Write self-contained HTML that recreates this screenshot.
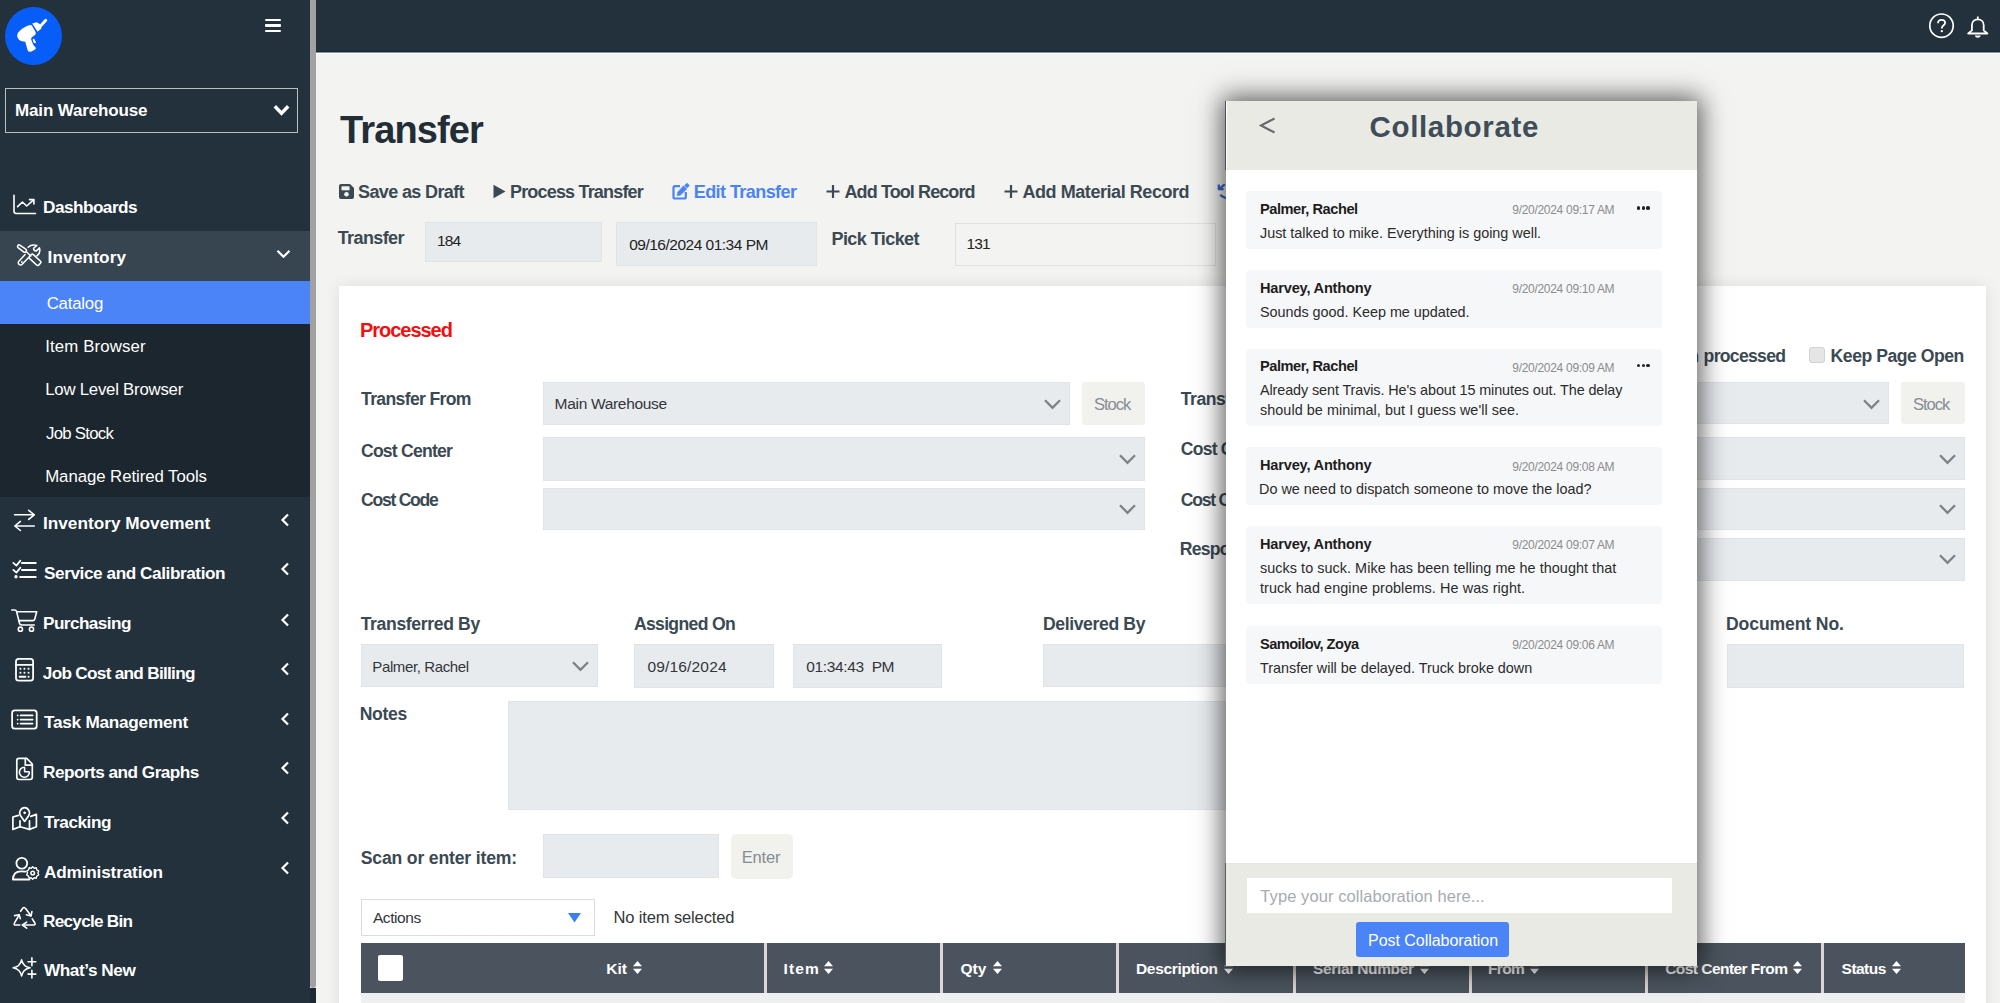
<!DOCTYPE html>
<html><head><meta charset="utf-8">
<style>
html,body{margin:0;padding:0}
body{width:2000px;height:1003px;overflow:hidden;position:relative;background:#f3f3f1;font-family:"Liberation Sans",sans-serif}
.a{position:absolute;box-sizing:border-box}
.t{position:absolute;white-space:nowrap;line-height:1;font-family:"Liberation Sans",sans-serif}
.inp{position:absolute;background:#e8ebee;box-sizing:border-box;border:1px solid #e1e4e7}
.chev{position:absolute}
.mc{position:absolute;left:1246.3px;width:416px;background:#f6f7f9;border-radius:4px;z-index:15}
.dots{position:absolute;left:1637px;margin-top:-1px;width:13px;height:4px;z-index:20}
.dots i{position:absolute;top:0;width:3.4px;height:3.4px;border-radius:50%;background:#222}
.dots i:nth-child(1){left:0}.dots i:nth-child(2){left:4.7px}.dots i:nth-child(3){left:9.4px}
svg{position:absolute;overflow:visible}
</style></head><body>

<!-- sidebar -->
<div class="a" style="left:0;top:0;width:310px;height:1003px;background:#22313b"></div>
<div class="a" style="left:310px;top:0;width:6px;height:988px;background:#a1a1a1;border-radius:0 0 3px 3px"></div>
<div class="a" style="left:310px;top:988px;width:6px;height:15px;background:#1c2931"></div>
<!-- logo -->
<div class="a" style="left:5px;top:7px;width:57px;height:58px;border-radius:50%;background:#075df8"></div>
<svg style="left:5px;top:7px" width="57" height="58" viewBox="0 0 57 58">
  <path d="M36 18.5 L40.8 13.2" stroke="#fff" stroke-width="2.8" stroke-linecap="round"/>
  <path d="M27.2 16.6 L31.5 15.3 L34 16.6 L36.4 18.6 L36.4 21.4 L32.6 24.8 Z" fill="#fff"/>
  <path d="M24.3 18.2 C20 19.5 14.5 23 12.6 26.5 C11.5 29.5 12.8 33 17 34.2 L20.3 34.8 L22.4 42.5 C22.9 44.6 24.5 45.3 26.5 44.5 L30 42.5 C31 41.8 31 40.8 30.2 40 L28.2 37.8 L26.2 32.5 C26 31.5 26.6 30.5 27.5 29.8 L30 28 C31 27 31 25.8 30.3 24.5 L27 18.8 C26.4 17.9 25.5 17.8 24.3 18.2 Z" fill="#fff"/>
  <path d="M27.6 32.4 L29 31.6 L31 35.2 L30.2 36.2 L28.8 35.9 Z" fill="#fff"/>
</svg>
<!-- hamburger -->
<div class="a" style="left:265px;top:18.5px;width:16px;height:2.6px;background:#fff;border-radius:1px"></div>
<div class="a" style="left:265px;top:24.2px;width:16px;height:2.6px;background:#fff;border-radius:1px"></div>
<div class="a" style="left:265px;top:29.8px;width:16px;height:2.6px;background:#fff;border-radius:1px"></div>
<!-- warehouse select -->
<div class="a" style="left:5px;top:88px;width:293px;height:44.5px;border:1.5px solid #b9bfc3"></div>
<svg style="left:273px;top:104px" width="17" height="12" viewBox="0 0 17 12"><path d="M1.8 2.2 L8.5 9.2 L15.2 2.2" fill="none" stroke="#fff" stroke-width="3.4"/></svg>
<!-- inventory group -->
<div class="a" style="left:0;top:231px;width:310px;height:50px;background:#36454f"></div>
<div class="a" style="left:0;top:281px;width:310px;height:42.5px;background:#4b84f6"></div>
<div class="a" style="left:0;top:323.5px;width:310px;height:173px;background:#1b262e"></div>
<svg style="left:276px;top:249px" width="15" height="10" viewBox="0 0 15 10"><path d="M1.5 1.8 L7.5 7.8 L13.5 1.8" fill="none" stroke="#fff" stroke-width="2.2"/></svg>
<!-- left chevrons -->
<svg style="left:280px;top:513px" width="10" height="14" viewBox="0 0 10 14"><path d="M8 1.5 L2.5 7 L8 12.5" fill="none" stroke="#fff" stroke-width="2.2"/></svg>
<svg style="left:280px;top:562px" width="10" height="14" viewBox="0 0 10 14"><path d="M8 1.5 L2.5 7 L8 12.5" fill="none" stroke="#fff" stroke-width="2.2"/></svg>
<svg style="left:280px;top:612.5px" width="10" height="14" viewBox="0 0 10 14"><path d="M8 1.5 L2.5 7 L8 12.5" fill="none" stroke="#fff" stroke-width="2.2"/></svg>
<svg style="left:280px;top:662px" width="10" height="14" viewBox="0 0 10 14"><path d="M8 1.5 L2.5 7 L8 12.5" fill="none" stroke="#fff" stroke-width="2.2"/></svg>
<svg style="left:280px;top:712px" width="10" height="14" viewBox="0 0 10 14"><path d="M8 1.5 L2.5 7 L8 12.5" fill="none" stroke="#fff" stroke-width="2.2"/></svg>
<svg style="left:280px;top:761px" width="10" height="14" viewBox="0 0 10 14"><path d="M8 1.5 L2.5 7 L8 12.5" fill="none" stroke="#fff" stroke-width="2.2"/></svg>
<svg style="left:280px;top:811px" width="10" height="14" viewBox="0 0 10 14"><path d="M8 1.5 L2.5 7 L8 12.5" fill="none" stroke="#fff" stroke-width="2.2"/></svg>
<svg style="left:280px;top:861px" width="10" height="14" viewBox="0 0 10 14"><path d="M8 1.5 L2.5 7 L8 12.5" fill="none" stroke="#fff" stroke-width="2.2"/></svg>
<!-- menu icons -->
<svg style="left:0;top:0" width="60" height="1003" viewBox="0 0 60 1003">
<g fill="none" stroke="#fff" stroke-width="1.6" stroke-linecap="round" stroke-linejoin="round">
  <!-- dashboards -->
  <path d="M14 195.2 L14 211.3 Q14 213.5 16.2 213.5 L35.5 213.5"/>
  <path d="M17.6 206.6 L22.4 202 L26.7 206 L33.6 199.8"/>
  <path d="M29.5 199.6 L33.9 199.6 L33.9 204"/>
  <!-- inventory tools -->
  <path d="M19.4 244.9 L25.8 249.2 Q26.9 250 26.4 251.3 L25.6 252 Q24.6 252.6 23.6 251.9 L18 247.6 Q17 246.6 17.8 245.6 Q18.4 244.6 19.4 244.9 Z" stroke-width="1.5"/>
  <path d="M26.2 251.6 L30.8 255.9" stroke-width="1.4"/>
  <rect x="-6.3" y="-2.7" width="12.6" height="5.4" rx="1.6" transform="translate(35 259.8) rotate(42.7)" stroke-width="1.6"/>
  <path d="M25.1 254.6 L18.9 261.2 A2.2 2.2 0 0 0 22.2 264.3 L28.4 257.7" stroke-width="1.5"/>
  <path d="M28.2 247.2 Q31.2 244.2 36.8 245.5 L33.6 248.3 Q33.4 250.8 36.2 251.1 L39.5 247.9 Q41 252.8 36.9 255.8" stroke-width="1.5"/>
  <circle cx="21.8" cy="262" r="0.45" fill="#fff" stroke-width="0.8"/>
<!-- inventory movement -->
  <path d="M14.6 514.8 L34.3 514.8 M28.7 510.3 L34.3 514.8 L28.7 519.4"/>
  <path d="M34.3 526 L14.8 526 M20.4 521.4 L14.8 526 L20.4 530.5"/>
  <!-- service -->
  <path d="M13.3 562.8 L16.4 565.6 L20.4 560.6 M13.3 569.8 L16.4 572.6 L20.4 567.6" stroke-width="1.7"/>
  <path d="M22 563 L35.7 563 M22 570 L35.7 570 M20.2 576.9 L35.7 576.9" stroke-width="2"/>
  <circle cx="16" cy="576.8" r="1.1" fill="#fff" stroke-width="1.2"/>
  <!-- purchasing -->
  <path d="M11.8 610 L14.6 610 Q16.2 610 16.6 611.6 L19.4 623 Q19.8 625 21.6 625 L34.3 625"/>
  <path d="M16.8 611.8 L36.7 611.8 L34.8 619 Q34.4 620.6 32.8 620.6 L18.8 620.6"/>
  <circle cx="20.4" cy="629.2" r="2.1"/><circle cx="31.5" cy="629.2" r="2.1"/>
  <!-- job cost -->
  <rect x="16" y="658.8" width="17.1" height="21.8" rx="2.6" stroke-width="1.8"/>
  <path d="M16 664.8 L33 664.8" stroke-width="1.8"/>
  <path d="M20.4 668.7 L20.5 668.7 M24.4 668.7 L24.5 668.7 M28.5 668.7 L28.6 668.7 M20.4 672.8 L20.5 672.8 M24.4 672.8 L24.5 672.8 M28.5 672.8 L28.6 672.8 M19.6 676.8 L25.4 676.8 M28.5 676.8 L28.6 676.8" stroke-width="1.9"/>
  <!-- task mgmt -->
  <rect x="12.1" y="710.4" width="24.6" height="18.2" rx="2.6" stroke-width="1.8"/>
  <path d="M17.6 715.4 L17.7 715.4 M17.6 719.6 L17.7 719.6 M17.6 723.6 L17.7 723.6 M20.6 715.4 L32.6 715.4 M20.6 719.6 L32.6 719.6 M20.6 723.6 L32.6 723.6" stroke-width="1.7"/>
  <!-- reports -->
  <path d="M19 758.4 L26.7 758.4 L32.3 764 L32.3 777.3 Q32.3 779.5 30.1 779.5 L19 779.5 Q16.8 779.5 16.8 777.3 L16.8 760.6 Q16.8 758.4 19 758.4 Z" stroke-width="1.7"/>
  <path d="M25.3 758.6 L25.3 765.2 L32 765.2" stroke-width="1.7"/>
  <path d="M29.4 772.2 A5 5 0 1 1 24.4 767.2" stroke-width="1.6"/>
  <path d="M24.6 767.8 L24.6 771.8 L28.8 771.8" stroke-width="1.6"/>
  <!-- tracking -->
  <path d="M18.4 815.4 L12.9 817 L12.9 829.4 L20 826.8 L29.5 829.4 L36.4 826.8 L36.4 814.4 L30.8 816.4" stroke-width="1.7"/>
  <path d="M20 820.8 L20 826.8 M29.5 820.8 L29.5 829.4" stroke-width="1.7"/>
  <path d="M24.6 821.4 L20.4 815.6 Q19 812.8 20.2 810.6 Q21.8 807.6 24.6 807.6 Q27.4 807.6 29 810.6 Q30.2 812.8 28.8 815.6 Z" stroke-width="1.7"/>
  <circle cx="24.6" cy="812.8" r="0.9" fill="#fff" stroke-width="1"/>
  <!-- administration -->
  <circle cx="21.8" cy="863.2" r="5.4" stroke-width="1.8"/>
  <path d="M25.2 871.6 Q23.5 871.3 21 871.3 Q13.2 871.3 12.9 879.5 L29.5 879.5" stroke-width="1.8"/>
  <circle cx="32.7" cy="873" r="1.8" stroke-width="1.5"/>
  <path d="M32.7 866.8 L34.2 868.2 L36.3 867.8 L36.8 869.9 L38.7 871 L37.9 873 L38.7 875 L36.8 876.1 L36.3 878.2 L34.2 877.8 L32.7 879.2 L31.2 877.8 L29.1 878.2 L28.6 876.1 L26.7 875 L27.5 873 L26.7 871 L28.6 869.9 L29.1 867.8 L31.2 868.2 Z" stroke-width="1.4"/>
  <!-- recycle -->
  <path d="M20.6 911.2 L22.6 908.4 Q24.2 906.6 25.6 908.6 L30.8 915.6"/>
  <path d="M26.4 914.8 L31 916 L31.9 911.6"/>
  <path d="M32.2 918.8 L35 923.2 Q35.6 924.8 33.8 924.9 L22.6 925"/>
  <path d="M26.7 922.2 L22.4 925 L26.7 928.2"/>
  <path d="M19.8 925 L15.4 925 Q13.6 925 14.4 923.2 L19.2 914.8"/>
  <path d="M14.6 915.6 L19.2 914.8 L20.3 918.6"/>
  <!-- what's new -->
  <path d="M21.6 959.8 Q23 966.4 30 967.8 Q23 969.2 21.6 975.9 Q20.2 969.2 13.2 967.8 Q20.2 966.4 21.6 959.8 Z" stroke-width="1.6"/>
  <path d="M31.9 957.9 L31.9 965.7 M28 961.8 L35.8 961.8 M31.9 970.2 L31.9 978 M28 974.1 L35.8 974.1" stroke-width="1.6"/>
</g>
</svg>


<!-- header -->
<div class="a" style="left:316px;top:0;width:1684px;height:52px;background:#22313b"></div>
<div class="a" style="left:316px;top:51px;width:1684px;height:1px;background:#19272f"></div>
<div class="a" style="left:316px;top:52px;width:1684px;height:1px;background:#8a9194"></div>
<div class="a" style="left:316px;top:53px;width:1684px;height:1px;background:#fdfdfc"></div>
<svg style="left:1928px;top:13px" width="26" height="26" viewBox="0 0 26 26">
  <circle cx="13.5" cy="12.7" r="11.7" fill="none" stroke="#fff" stroke-width="1.7"/>
  <path d="M10 10.2 C10 7.9 11.5 6.8 13.5 6.8 C15.6 6.8 17.1 8.1 17.1 9.9 C17.1 12.2 13.8 12.5 13.8 15.4" fill="none" stroke="#fff" stroke-width="1.8"/>
  <circle cx="13.8" cy="18.2" r="1.15" fill="#fff"/>
</svg>
<svg style="left:1967px;top:15px" width="22" height="25" viewBox="0 0 22 25">
  <path d="M10.8 1.4 L10.8 4.4 M4.9 15.4 L4.9 10.2 C4.9 6.6 7.5 4.4 10.8 4.4 C14.1 4.4 16.7 6.6 16.7 10.2 L16.7 15.4 L20.4 18.5 L1.2 18.5 Z" fill="none" stroke="#fff" stroke-width="1.8" stroke-linejoin="round"/>
  <path d="M7.9 20.6 C8.4 23.6 13.2 23.6 13.7 20.6 Z" fill="#fff"/>
</svg>

<!-- toolbar icons -->
<svg style="left:338.5px;top:183.5px" width="15" height="15" viewBox="0 0 15 15">
  <path d="M0 2 Q0 0 2 0 L11 0 L15 4 L15 13 Q15 15 13 15 L2 15 Q0 15 0 13 Z" fill="#3b4953"/>
  <rect x="2.5" y="2.3" width="8" height="4" fill="#f3f3f1"/>
  <circle cx="7.5" cy="10.3" r="2.3" fill="#f3f3f1"/>
</svg>
<svg style="left:493px;top:183.5px" width="13" height="15" viewBox="0 0 13 15"><path d="M0.5 0.8 L12.5 7.5 L0.5 14.2 Z" fill="#3b4953"/></svg>
<svg style="left:672px;top:182.5px" width="18" height="17" viewBox="0 0 18 17">
  <path d="M8 3.2 L3 3.2 Q1.5 3.2 1.5 4.7 L1.5 14 Q1.5 15.5 3 15.5 L12.3 15.5 Q13.8 15.5 13.8 14 L13.8 9" fill="none" stroke="#4a84f4" stroke-width="2.2"/>
  <path d="M11.5 2.8 L14.7 6 L8.6 12.1 L5.1 12.8 L5.8 9.1 Z" fill="#4a84f4" stroke="#4a84f4" stroke-width="0.6" stroke-linejoin="round"/><path d="M15 0.6 L16.9 2.5 L15 4.4 L13.1 2.5 Z" fill="#4a84f4" stroke="#4a84f4" stroke-width="1.2" stroke-linejoin="round"/>
</svg>
<svg style="left:825.5px;top:183.5px" width="14" height="15" viewBox="0 0 14 15"><path d="M7 1 L7 14 M0.5 7.5 L13.5 7.5" stroke="#3b4953" stroke-width="2.2"/></svg>
<svg style="left:1003.5px;top:183.5px" width="14" height="15" viewBox="0 0 14 15"><path d="M7 1 L7 14 M0.5 7.5 L13.5 7.5" stroke="#3b4953" stroke-width="2.2"/></svg>
<svg style="left:1217px;top:183px" width="16" height="16" viewBox="0 0 16 16"><path d="M1.8 1.6 L1.8 6.2 L6.6 6.2 M2.2 5.8 L7.8 1.4" fill="none" stroke="#3566d4" stroke-width="2.2" stroke-linejoin="round"/><path d="M3.8 12.4 Q5.5 14 8.8 15" fill="none" stroke="#3566d4" stroke-width="2.2" stroke-linecap="round"/></svg>

<!-- top inputs -->
<div class="inp" style="left:425.4px;top:222.3px;width:176.3px;height:39.3px"></div>
<div class="inp" style="left:616.3px;top:222.3px;width:200.7px;height:43.4px"></div>
<div class="a" style="left:955px;top:222.5px;width:260.5px;height:43px;border:1px solid #e0e0de;background:#f3f3f1"></div>

<!-- card -->
<div class="a" style="left:339px;top:286px;width:1647px;height:760px;background:#fff;box-shadow:0 0 14px rgba(0,0,0,0.09)"></div>
<div class="inp" style="left:543.2px;top:381.5px;width:526.7px;height:43.1px"></div>
<svg style="left:1043.5px;top:398.5px" width="17" height="11" viewBox="0 0 17 11"><path d="M1 1.2 L8.5 8.8 L16 1.2" fill="none" stroke="#7d8287" stroke-width="2.3"/></svg>
<div class="a" style="left:1081.8px;top:381.5px;width:63px;height:43.1px;background:#f1f1ee;border-radius:3px"></div>
<div class="inp" style="left:543.2px;top:437.3px;width:601.6px;height:43.4px"></div>
<svg style="left:1118.5px;top:454px" width="17" height="11" viewBox="0 0 17 11"><path d="M1 1.2 L8.5 8.8 L16 1.2" fill="none" stroke="#7d8287" stroke-width="2.3"/></svg>
<div class="inp" style="left:543.2px;top:487.7px;width:601.6px;height:42.8px"></div>
<svg style="left:1118.5px;top:504px" width="17" height="11" viewBox="0 0 17 11"><path d="M1 1.2 L8.5 8.8 L16 1.2" fill="none" stroke="#7d8287" stroke-width="2.3"/></svg>
<!-- right column -->
<div class="inp" style="left:1350px;top:381.7px;width:539.4px;height:42.7px"></div>
<svg style="left:1862.5px;top:398.5px" width="17" height="11" viewBox="0 0 17 11"><path d="M1 1.2 L8.5 8.8 L16 1.2" fill="none" stroke="#7d8287" stroke-width="2.3"/></svg>
<div class="a" style="left:1901px;top:381.7px;width:63.8px;height:42.7px;background:#f1f1ee;border-radius:3px"></div>
<div class="inp" style="left:1350px;top:437.4px;width:614.8px;height:42.6px"></div>
<svg style="left:1938.5px;top:454px" width="17" height="11" viewBox="0 0 17 11"><path d="M1 1.2 L8.5 8.8 L16 1.2" fill="none" stroke="#7d8287" stroke-width="2.3"/></svg>
<div class="inp" style="left:1350px;top:487.6px;width:614.8px;height:42.8px"></div>
<svg style="left:1938.5px;top:504px" width="17" height="11" viewBox="0 0 17 11"><path d="M1 1.2 L8.5 8.8 L16 1.2" fill="none" stroke="#7d8287" stroke-width="2.3"/></svg>
<div class="inp" style="left:1350px;top:537.5px;width:614.8px;height:43.1px"></div>
<svg style="left:1938.5px;top:554px" width="17" height="11" viewBox="0 0 17 11"><path d="M1 1.2 L8.5 8.8 L16 1.2" fill="none" stroke="#7d8287" stroke-width="2.3"/></svg>
<div class="a" style="left:1809px;top:347px;width:16px;height:16px;border:1px solid #d2d2d2;border-radius:3px;background:#e5e5e5"></div>

<!-- row 2 -->
<div class="inp" style="left:360.7px;top:644px;width:237.6px;height:43.2px"></div>
<svg style="left:572px;top:661px" width="17" height="11" viewBox="0 0 17 11"><path d="M1 1.2 L8.5 8.8 L16 1.2" fill="none" stroke="#7d8287" stroke-width="2.3"/></svg>
<div class="inp" style="left:633.9px;top:644px;width:140.4px;height:44px"></div>
<div class="inp" style="left:792.7px;top:644px;width:149px;height:44px"></div>
<div class="inp" style="left:1043.4px;top:644px;width:300px;height:43.2px"></div>
<div class="inp" style="left:1727px;top:644.3px;width:236.6px;height:44px"></div>
<div class="inp" style="left:507.9px;top:700.7px;width:1000px;height:108.9px"></div>

<div class="inp" style="left:543px;top:834.4px;width:176px;height:44.1px"></div>
<div class="a" style="left:731px;top:834.2px;width:62px;height:44.6px;background:#f1f1ee;border-radius:5px"></div>
<div class="a" style="left:360.7px;top:899.2px;width:234.5px;height:36.5px;background:#fff;border:1px solid #dadcde"></div>
<svg style="left:567.5px;top:912.5px" width="13" height="10" viewBox="0 0 13 10"><path d="M0 0 L13 0 L6.5 9.5 Z" fill="#3d7ff0"/></svg>

<!-- table header -->
<div class="a" style="left:360.7px;top:943px;width:1604.3px;height:50px;background:#4b545e"></div>
<div class="a" style="left:360.7px;top:993px;width:1604.3px;height:20px;background:#eeeff1"></div>
<div class="a" style="left:378.3px;top:955px;width:25.2px;height:25.7px;background:#fff;border-radius:2px"></div>
<div class="a" style="left:763.6px;top:943px;width:3px;height:50px;background:#dcd6d0"></div>
<div class="a" style="left:940.1px;top:943px;width:3px;height:50px;background:#dcd6d0"></div>
<div class="a" style="left:1116.2px;top:943px;width:3px;height:50px;background:#dcd6d0"></div>
<div class="a" style="left:1292.8px;top:943px;width:3px;height:50px;background:#dcd6d0"></div>
<div class="a" style="left:1468.8px;top:943px;width:3px;height:50px;background:#dcd6d0"></div>
<div class="a" style="left:1645.2px;top:943px;width:3px;height:50px;background:#dcd6d0"></div>
<div class="a" style="left:1821.0px;top:943px;width:3px;height:50px;background:#dcd6d0"></div>
<svg style="left:632.7px;top:961px;z-index:1" width="9" height="13" viewBox="0 0 9 13"><path d="M4.5 0 L9 5.3 L0 5.3 Z M0 7.7 L9 7.7 L4.5 13 Z" fill="#fff"/></svg>
<svg style="left:824.0px;top:961px;z-index:1" width="9" height="13" viewBox="0 0 9 13"><path d="M4.5 0 L9 5.3 L0 5.3 Z M0 7.7 L9 7.7 L4.5 13 Z" fill="#fff"/></svg>
<svg style="left:992.7px;top:961px;z-index:1" width="9" height="13" viewBox="0 0 9 13"><path d="M4.5 0 L9 5.3 L0 5.3 Z M0 7.7 L9 7.7 L4.5 13 Z" fill="#fff"/></svg>
<svg style="left:1223.6px;top:961px;z-index:1" width="9" height="13" viewBox="0 0 9 13"><path d="M4.5 0 L9 5.3 L0 5.3 Z M0 7.7 L9 7.7 L4.5 13 Z" fill="#fff"/></svg>
<svg style="left:1420.0px;top:961px;z-index:1" width="9" height="13" viewBox="0 0 9 13"><path d="M4.5 0 L9 5.3 L0 5.3 Z M0 7.7 L9 7.7 L4.5 13 Z" fill="#fff"/></svg>
<svg style="left:1530.0px;top:961px;z-index:1" width="9" height="13" viewBox="0 0 9 13"><path d="M4.5 0 L9 5.3 L0 5.3 Z M0 7.7 L9 7.7 L4.5 13 Z" fill="#fff"/></svg>
<svg style="left:1793.2px;top:961px;z-index:1" width="9" height="13" viewBox="0 0 9 13"><path d="M4.5 0 L9 5.3 L0 5.3 Z M0 7.7 L9 7.7 L4.5 13 Z" fill="#fff"/></svg>
<svg style="left:1891.7px;top:961px;z-index:1" width="9" height="13" viewBox="0 0 9 13"><path d="M4.5 0 L9 5.3 L0 5.3 Z M0 7.7 L9 7.7 L4.5 13 Z" fill="#fff"/></svg>


<div class="t" style="left:15.0px;top:102.4px;font-size:17px;font-weight:bold;color:#fff;letter-spacing:-0.15px;">Main Warehouse</div>
<div class="t" style="left:43.0px;top:199.4px;font-size:17.2px;font-weight:bold;color:#fff;letter-spacing:-0.53px;">Dashboards</div>
<div class="t" style="left:47.6px;top:249.4px;font-size:17.2px;font-weight:bold;color:#fff;letter-spacing:0.15px;">Inventory</div>
<div class="t" style="left:43.0px;top:515.4px;font-size:17.2px;font-weight:bold;color:#fff;letter-spacing:0.01px;">Inventory Movement</div>
<div class="t" style="left:44.0px;top:564.7px;font-size:17.2px;font-weight:bold;color:#fff;letter-spacing:-0.43px;">Service and Calibration</div>
<div class="t" style="left:43.0px;top:615.4px;font-size:17.2px;font-weight:bold;color:#fff;letter-spacing:-0.57px;">Purchasing</div>
<div class="t" style="left:42.8px;top:665.4px;font-size:17.2px;font-weight:bold;color:#fff;letter-spacing:-0.71px;">Job Cost and Billing</div>
<div class="t" style="left:44.0px;top:714.4px;font-size:17.2px;font-weight:bold;color:#fff;letter-spacing:-0.25px;">Task Management</div>
<div class="t" style="left:43.0px;top:763.6px;font-size:17.2px;font-weight:bold;color:#fff;letter-spacing:-0.52px;">Reports and Graphs</div>
<div class="t" style="left:44.0px;top:813.7px;font-size:17.2px;font-weight:bold;color:#fff;letter-spacing:-0.46px;">Tracking</div>
<div class="t" style="left:44.0px;top:863.6px;font-size:17.2px;font-weight:bold;color:#fff;letter-spacing:-0.17px;">Administration</div>
<div class="t" style="left:43.0px;top:913.1px;font-size:17.2px;font-weight:bold;color:#fff;letter-spacing:-0.74px;">Recycle Bin</div>
<div class="t" style="left:44.0px;top:962.4px;font-size:17.2px;font-weight:bold;color:#fff;letter-spacing:-0.45px;">What’s New</div>
<div class="t" style="left:46.7px;top:295.7px;font-size:16.8px;font-weight:normal;color:#fff;letter-spacing:-0.22px;">Catalog</div>
<div class="t" style="left:45.2px;top:338.6px;font-size:16.8px;font-weight:normal;color:#fff;letter-spacing:0.14px;">Item Browser</div>
<div class="t" style="left:45.2px;top:381.7px;font-size:16.8px;font-weight:normal;color:#fff;letter-spacing:-0.23px;">Low Level Browser</div>
<div class="t" style="left:46.0px;top:425.5px;font-size:16.8px;font-weight:normal;color:#fff;letter-spacing:-0.72px;">Job Stock</div>
<div class="t" style="left:45.2px;top:469.0px;font-size:16.8px;font-weight:normal;color:#fff;letter-spacing:-0.06px;">Manage Retired Tools</div>
<div class="t" style="left:340.0px;top:111.3px;font-size:38px;font-weight:bold;color:#222d36;letter-spacing:-0.88px;">Transfer</div>
<div class="t" style="left:358.0px;top:183.3px;font-size:18px;font-weight:bold;color:#3b4953;letter-spacing:-0.63px;">Save as Draft</div>
<div class="t" style="left:510.0px;top:183.3px;font-size:18px;font-weight:bold;color:#3b4953;letter-spacing:-0.82px;">Process Transfer</div>
<div class="t" style="left:693.7px;top:183.3px;font-size:18px;font-weight:bold;color:#4a84f4;letter-spacing:-0.56px;">Edit Transfer</div>
<div class="t" style="left:844.5px;top:183.3px;font-size:18px;font-weight:bold;color:#3b4953;letter-spacing:-0.90px;">Add Tool Record</div>
<div class="t" style="left:1022.5px;top:183.3px;font-size:18px;font-weight:bold;color:#3b4953;letter-spacing:-0.44px;">Add Material Record</div>
<div class="t" style="left:337.7px;top:228.6px;font-size:18px;font-weight:bold;color:#3b4953;letter-spacing:-0.60px;">Transfer</div>
<div class="t" style="left:437.0px;top:233.2px;font-size:15.5px;font-weight:normal;color:#222;letter-spacing:-0.92px;">184</div>
<div class="t" style="left:629.2px;top:236.6px;font-size:15.5px;font-weight:normal;color:#222;letter-spacing:-0.50px;">09/16/2024 01:34 PM</div>
<div class="t" style="left:831.5px;top:230.2px;font-size:18px;font-weight:bold;color:#3b4953;letter-spacing:-0.57px;">Pick Ticket</div>
<div class="t" style="left:966.5px;top:236.2px;font-size:15.5px;font-weight:normal;color:#222;letter-spacing:-0.87px;">131</div>
<div class="t" style="left:360.0px;top:320.4px;font-size:20px;font-weight:bold;color:#f20f0f;letter-spacing:-1.03px;">Processed</div>
<div class="t" style="left:361.0px;top:391.3px;font-size:17.6px;font-weight:bold;color:#3b4953;letter-spacing:-0.65px;">Transfer From</div>
<div class="t" style="left:554.6px;top:396.3px;font-size:15.5px;font-weight:normal;color:#323639;letter-spacing:-0.31px;">Main Warehouse</div>
<div class="t" style="left:1094.0px;top:395.5px;font-size:16.5px;font-weight:normal;color:#858c93;letter-spacing:-1.00px;">Stock</div>
<div class="t" style="left:361.0px;top:442.5px;font-size:17.6px;font-weight:bold;color:#3b4953;letter-spacing:-0.79px;">Cost Center</div>
<div class="t" style="left:361.0px;top:492.3px;font-size:17.6px;font-weight:bold;color:#3b4953;letter-spacing:-1.27px;">Cost Code</div>
<div class="t" style="left:1180.8px;top:390.5px;font-size:17.6px;font-weight:bold;color:#3b4953;letter-spacing:-0.48px;">Transfer To</div>
<div class="t" style="left:1180.8px;top:441.4px;font-size:17.6px;font-weight:bold;color:#3b4953;letter-spacing:-0.79px;">Cost Center</div>
<div class="t" style="left:1180.8px;top:491.8px;font-size:17.6px;font-weight:bold;color:#3b4953;letter-spacing:-1.27px;">Cost Code</div>
<div class="t" style="left:1179.8px;top:540.7px;font-size:17.6px;font-weight:bold;color:#3b4953;letter-spacing:-0.78px;">Responsible</div>
<div class="t" style="left:1703.6px;top:347.7px;font-size:17.6px;font-weight:bold;color:#3b4953;letter-spacing:-0.70px;">processed</div>
<div class="t" style="top:347.7px;font-size:17.6px;font-weight:bold;color:#3b4953;letter-spacing:0.00px;right:301px;">Close when</div>
<div class="t" style="left:1830.6px;top:347.7px;font-size:17.6px;font-weight:bold;color:#3b4953;letter-spacing:-0.47px;">Keep Page Open</div>
<div class="t" style="left:1913.0px;top:395.5px;font-size:16.5px;font-weight:normal;color:#858c93;letter-spacing:-1.00px;">Stock</div>
<div class="t" style="left:360.7px;top:615.7px;font-size:17.6px;font-weight:bold;color:#3b4953;letter-spacing:-0.36px;">Transferred By</div>
<div class="t" style="left:633.9px;top:615.7px;font-size:17.6px;font-weight:bold;color:#3b4953;letter-spacing:-0.67px;">Assigned On</div>
<div class="t" style="left:1042.9px;top:615.7px;font-size:17.6px;font-weight:bold;color:#3b4953;letter-spacing:-0.37px;">Delivered By</div>
<div class="t" style="left:1726.0px;top:615.7px;font-size:17.6px;font-weight:bold;color:#3b4953;letter-spacing:-0.12px;">Document No.</div>
<div class="t" style="left:372.3px;top:658.9px;font-size:15px;font-weight:normal;color:#323639;letter-spacing:-0.38px;">Palmer, Rachel</div>
<div class="t" style="left:647.4px;top:659.2px;font-size:15.5px;font-weight:normal;color:#323639;letter-spacing:0.18px;">09/16/2024</div>
<div class="t" style="left:806.2px;top:659.2px;font-size:15.5px;font-weight:normal;color:#323639;letter-spacing:-0.35px;">01:34:43  PM</div>
<div class="t" style="left:359.7px;top:705.7px;font-size:17.6px;font-weight:bold;color:#3b4953;letter-spacing:-0.32px;">Notes</div>
<div class="t" style="left:360.7px;top:849.8px;font-size:17.6px;font-weight:bold;color:#3b4953;letter-spacing:-0.16px;">Scan or enter item:</div>
<div class="t" style="left:741.8px;top:848.7px;font-size:16.5px;font-weight:normal;color:#858c93;letter-spacing:-0.19px;">Enter</div>
<div class="t" style="left:372.9px;top:909.5px;font-size:15.5px;font-weight:normal;color:#323639;letter-spacing:-0.41px;">Actions</div>
<div class="t" style="left:613.5px;top:908.5px;font-size:16.5px;font-weight:normal;color:#323639;letter-spacing:-0.13px;">No item selected</div>
<div class="t" style="left:606.3px;top:960.7px;font-size:15.5px;font-weight:bold;color:#fff;letter-spacing:-0.05px;">Kit</div>
<div class="t" style="left:783.6px;top:960.7px;font-size:15.5px;font-weight:bold;color:#fff;letter-spacing:1.10px;">Item</div>
<div class="t" style="left:960.6px;top:960.7px;font-size:15.5px;font-weight:bold;color:#fff;letter-spacing:-0.06px;">Qty</div>
<div class="t" style="left:1136.0px;top:960.7px;font-size:15.5px;font-weight:bold;color:#fff;letter-spacing:-0.32px;">Description</div>
<div class="t" style="left:1313.0px;top:960.7px;font-size:15.5px;font-weight:bold;color:#fff;letter-spacing:-0.34px;">Serial Number</div>
<div class="t" style="left:1488.0px;top:960.7px;font-size:15.5px;font-weight:bold;color:#fff;letter-spacing:-0.66px;">From</div>
<div class="t" style="left:1665.2px;top:960.7px;font-size:15.5px;font-weight:bold;color:#fff;letter-spacing:-0.54px;">Cost Center From</div>
<div class="t" style="left:1841.6px;top:960.7px;font-size:15.5px;font-weight:bold;color:#fff;letter-spacing:-0.53px;">Status</div>
<div class="t" style="left:1369.5px;top:111.6px;font-size:29.5px;font-weight:bold;color:#3e4d58;letter-spacing:0.66px;z-index:20;">Collaborate</div>
<div class="t" style="left:1260.0px;top:202.2px;font-size:14.6px;font-weight:bold;color:#1d1d1d;letter-spacing:-0.44px;z-index:20;">Palmer, Rachel</div>
<div class="t" style="left:1512.3px;top:204.4px;font-size:12px;font-weight:normal;color:#8c8c8c;letter-spacing:-0.30px;z-index:20;">9/20/2024 09:17 AM</div>
<div class="t" style="left:1260.0px;top:226.2px;font-size:14.4px;font-weight:normal;color:#2b2b2b;letter-spacing:-0.01px;z-index:20;">Just talked to mike. Everything is going well.</div>
<div class="t" style="left:1260.0px;top:281.1px;font-size:14.6px;font-weight:bold;color:#1d1d1d;letter-spacing:-0.20px;z-index:20;">Harvey, Anthony</div>
<div class="t" style="left:1512.3px;top:283.3px;font-size:12px;font-weight:normal;color:#8c8c8c;letter-spacing:-0.30px;z-index:20;">9/20/2024 09:10 AM</div>
<div class="t" style="left:1260.0px;top:305.1px;font-size:14.4px;font-weight:normal;color:#2b2b2b;letter-spacing:-0.03px;z-index:20;">Sounds good. Keep me updated.</div>
<div class="t" style="left:1260.0px;top:359.4px;font-size:14.6px;font-weight:bold;color:#1d1d1d;letter-spacing:-0.44px;z-index:20;">Palmer, Rachel</div>
<div class="t" style="left:1512.3px;top:361.6px;font-size:12px;font-weight:normal;color:#8c8c8c;letter-spacing:-0.30px;z-index:20;">9/20/2024 09:09 AM</div>
<div class="t" style="left:1260.0px;top:383.4px;font-size:14.4px;font-weight:normal;color:#2b2b2b;letter-spacing:-0.10px;z-index:20;">Already sent Travis. He's about 15 minutes out. The delay</div>
<div class="t" style="left:1260.0px;top:403.4px;font-size:14.4px;font-weight:normal;color:#2b2b2b;letter-spacing:0.05px;z-index:20;">should be minimal, but I guess we'll see.</div>
<div class="t" style="left:1260.0px;top:458.3px;font-size:14.6px;font-weight:bold;color:#1d1d1d;letter-spacing:-0.20px;z-index:20;">Harvey, Anthony</div>
<div class="t" style="left:1512.3px;top:460.5px;font-size:12px;font-weight:normal;color:#8c8c8c;letter-spacing:-0.30px;z-index:20;">9/20/2024 09:08 AM</div>
<div class="t" style="left:1259.0px;top:482.3px;font-size:14.4px;font-weight:normal;color:#2b2b2b;letter-spacing:0.01px;z-index:20;">Do we need to dispatch someone to move the load?</div>
<div class="t" style="left:1260.0px;top:537.2px;font-size:14.6px;font-weight:bold;color:#1d1d1d;letter-spacing:-0.20px;z-index:20;">Harvey, Anthony</div>
<div class="t" style="left:1512.3px;top:539.4px;font-size:12px;font-weight:normal;color:#8c8c8c;letter-spacing:-0.30px;z-index:20;">9/20/2024 09:07 AM</div>
<div class="t" style="left:1260.0px;top:561.2px;font-size:14.4px;font-weight:normal;color:#2b2b2b;letter-spacing:0.05px;z-index:20;">sucks to suck. Mike has been telling me he thought that</div>
<div class="t" style="left:1260.0px;top:581.2px;font-size:14.4px;font-weight:normal;color:#2b2b2b;letter-spacing:0.09px;z-index:20;">truck had engine problems. He was right.</div>
<div class="t" style="left:1260.0px;top:636.7px;font-size:14.6px;font-weight:bold;color:#1d1d1d;letter-spacing:-0.53px;z-index:20;">Samoilov, Zoya</div>
<div class="t" style="left:1512.3px;top:638.9px;font-size:12px;font-weight:normal;color:#8c8c8c;letter-spacing:-0.30px;z-index:20;">9/20/2024 09:06 AM</div>
<div class="t" style="left:1260.0px;top:660.7px;font-size:14.4px;font-weight:normal;color:#2b2b2b;letter-spacing:-0.02px;z-index:20;">Transfer will be delayed. Truck broke down</div>
<div class="t" style="left:1260.3px;top:888.1px;font-size:16.5px;font-weight:normal;color:#a6abb0;letter-spacing:0.08px;z-index:20;">Type your collaboration here...</div>
<div class="t" style="left:1368.0px;top:932.8px;font-size:16px;font-weight:normal;color:#fff;letter-spacing:-0.04px;z-index:20;">Post Collaboration</div>

<!-- collaborate panel -->
<div class="a" style="left:1226px;top:100.8px;width:471px;height:865.6px;background:#fff;box-shadow:0 0 24px 4px rgba(0,0,0,0.63);z-index:10"></div>
<div class="a" style="left:1226px;top:100.8px;width:471px;height:69px;background:#eaeae5;z-index:11;border-left:1px solid #fff"></div>
<div class="a" style="left:1225px;top:100.8px;width:1.2px;height:69px;background:#4a4f53;z-index:11"></div>
<div class="a" style="left:1226px;top:863px;width:471px;height:103.4px;background:#eaeae5;border-top:1px solid #e3e6e8;z-index:11"></div>
<div class="a" style="left:1225px;top:863px;width:1.2px;height:103.4px;background:#5a5f63;z-index:11"></div>
<svg style="left:1259px;top:116.5px;z-index:12" width="17" height="17" viewBox="0 0 17 17"><path d="M15.5 1.5 L2 8.5 L15.5 15.5" fill="none" stroke="#67696b" stroke-width="2.1"/></svg>
<div class="a" style="left:1247.3px;top:878px;width:424.7px;height:34.8px;background:#fff;z-index:12"></div>
<div class="a" style="left:1356.3px;top:921.7px;width:152.7px;height:35.1px;background:#4b84f6;border-radius:3px;z-index:12"></div>
<div class="mc" style="top:191.3px;height:57.4px"></div>
<div class="dots" style="top:207.3px"><i></i><i></i><i></i></div>
<div class="mc" style="top:270.2px;height:57.5px"></div>
<div class="mc" style="top:348.5px;height:77.9px"></div>
<div class="dots" style="top:364.5px"><i></i><i></i><i></i></div>
<div class="mc" style="top:447.4px;height:57.8px"></div>
<div class="mc" style="top:526.3px;height:78.1px"></div>
<div class="mc" style="top:625.8px;height:57.8px"></div>


</body></html>
